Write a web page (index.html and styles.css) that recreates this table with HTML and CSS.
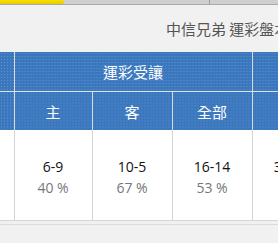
FILE: index.html
```html
<!DOCTYPE html>
<html>
<head>
<meta charset="utf-8">
<link rel="stylesheet" href="styles.css">
</head>
<body>
<div class="page">
  <div class="tabs">
    <div class="tab active"></div>
    <div class="tab t2"></div>
    <div class="tab t3"></div>
  </div>
  <div class="title"><span>中信兄弟 運彩盤本季戰績</span></div>
  <table class="grid">
    <colgroup>
      <col class="c0"><col class="c1"><col class="c"><col class="c"><col class="c">
    </colgroup>
    <thead>
      <tr class="h1"><th></th><th colspan="3">運彩受讓</th><th></th></tr>
      <tr class="h2"><th></th><th>主</th><th>客</th><th>全部</th><th></th></tr>
    </thead>
    <tbody>
      <tr>
        <td></td>
        <td><div class="score">6-9</div><div class="pct">40 %</div></td>
        <td><div class="score">10-5</div><div class="pct">67 %</div></td>
        <td><div class="score">16-14</div><div class="pct">53 %</div></td>
        <td><div class="score">31-28</div><div class="pct">52%</div></td>
      </tr>
    </tbody>
  </table>
  <div class="foot"></div>
</div>
</body>
</html>
```
FILE: styles.css
```css
html, body { margin: 0; padding: 0; }
body {
  background: #ebebeb;
  font-family: "Open Sans", "Noto Sans CJK TC", sans-serif;
  overflow: hidden;
}
.page { width: 278px; height: 243px; overflow: hidden; background: #f1f1f1; }
.tabs {
  display: flex;
  height: 4px;
  background: #cfcfcf;
  border-bottom: 1px solid #a9a9a9;
}
.tab { height: 4px; }
.tab.active {
  width: 64px;
  background: linear-gradient(#f7e000, #e8c800);
  border-radius: 0 3px 3px 0;
}
.tab.t2 { width: 145px; border-right: 1px solid #a0a0a0; }
.title {
  height: 47px;
  display: flex;
  align-items: center;
  padding-left: 166px;
  white-space: nowrap;
  font-family: "Noto Sans CJK TC", sans-serif;
  font-size: 15px;
  color: #555;
}
.grid {
  border-collapse: collapse;
  table-layout: fixed;
  width: 332px;
  background: #fff;
}
.c0 { width: 14px; }
.c1 { width: 78px; }
.c { width: 80px; }
.grid th {
  background-color: #3b77bd;
  background-image: radial-gradient(circle, rgba(120,170,230,0.55) 0.6px, transparent 0.9px);
  background-size: 3px 3px;
  color: #fff;
  font-family: "Noto Sans CJK TC", sans-serif;
  font-weight: normal;
  font-size: 15px;
  border-left: 1px solid #d8d8d8;
  border-right: 1px solid #d8d8d8;
  padding: 0;
  text-align: center;
}
.grid th:first-child { border-left: none; }
.h1 th { height: 39px; border-bottom: 1px solid #e4e4e4; }
.h2 th { height: 38px; }
.grid td {
  height: 86px;
  border: 1px solid #d4d4d4;
  border-top: none;
  text-align: center;
  vertical-align: middle;
  padding: 4px 0 0 0;
}
.grid td:first-child { border-left: none; }
.score { font-size: 14px; color: #111; line-height: 21px; }
.pct { font-size: 14px; color: #777; line-height: 21px; }
.foot {
  height: 3px;
  background: #f1f1f1;
  border-bottom: 1px solid #dcdcdc;
}
```
